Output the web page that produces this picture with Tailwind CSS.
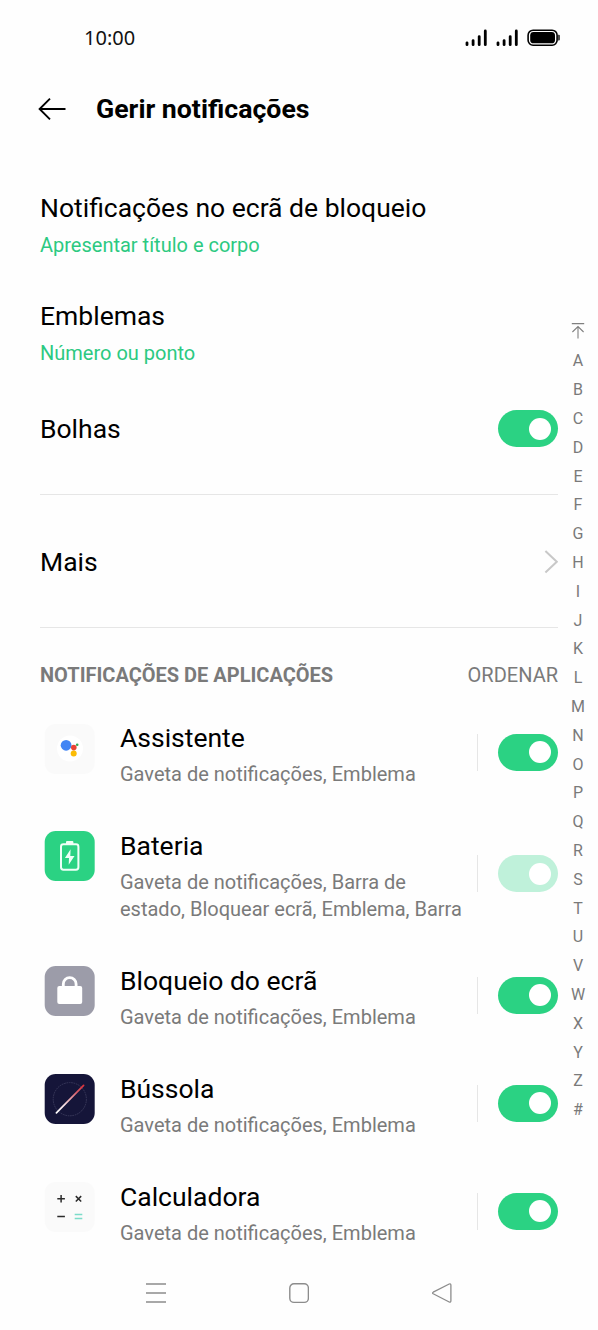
<!DOCTYPE html>
<html lang="pt">
<head>
<meta charset="utf-8">
<title>Gerir notificações</title>
<script src="https://cdn.jsdelivr.net/npm/@tailwindcss/browser@4"></script>
</head>
<body class="w-[598px] h-[1330px] overflow-hidden bg-[#fefefe] font-['Roboto',sans-serif] text-black">

<!-- Status bar -->
<div class="flex h-[75px] items-center justify-between pl-[84px] pr-[37px]">
  <span class="font-['Noto_Sans',sans-serif] text-[20px] leading-[24px] text-[#111]">10:00</span>
  <svg class="h-[20px] w-[96px]" viewBox="0 0 96 20">
    <g stroke="#000" stroke-width="2.8" stroke-linecap="round">
      <path d="M2 14.8v1.9M8.1 12.6v4.1M14.2 8.6v8.1M20.3 3v13.7M33 14.8v1.9M39.1 12.6v4.1M45.2 8.6v8.1M51.3 3v13.7"/>
    </g>
    <rect x="63.1" y="2.2" width="29" height="15" rx="5" fill="none" stroke="#000" stroke-width="1.6"/>
    <rect x="65.2" y="4.1" width="24.8" height="11.2" rx="3.4"/>
    <path d="M93.2 6.8h.6a1 1 0 0 1 1 1v3.8a1 1 0 0 1-1 1h-.6z" fill="#222"/>
  </svg>
</div>

<!-- Title bar -->
<header class="flex h-[68px] items-center gap-[30px] pl-[38px]">
  <svg class="h-[24px] w-[28px]" viewBox="0 0 28 24" fill="none" stroke="#000" stroke-width="1.9"><path d="M27.5 12H1.8M12 1.6L1.6 12 12 22.4"/></svg>
  <h1 class="text-[26.7px] font-bold leading-[32px]">Gerir notificações</h1>
</header>

<div class="flex h-[1122px]">
  <main class="w-[558px] pl-[40px] pt-[26px]">
    <div class="h-[108px] pt-[23px]">
      <div class="text-[26.5px] leading-[32px]">Notificações no ecrã de bloqueio</div>
      <div class="mt-[8px] text-[20px] leading-[27px] text-[#2cc981]">Apresentar título e corpo</div>
    </div>
    <div class="h-[108px] pt-[23px]">
      <div class="text-[26.5px] leading-[32px]">Emblemas</div>
      <div class="mt-[8px] text-[20px] leading-[27px] text-[#2cc981]">Número ou ponto</div>
    </div>
    <div class="flex h-[87px] items-center justify-between">
      <div class="pt-px text-[26.5px] leading-[32px]">Bolhas</div>
      <div class="flex h-[37px] w-[60px] items-center justify-end rounded-full bg-[#2bd283] pr-[7px]"><span class="size-[22px] rounded-full bg-white"></span></div>
    </div>
    <div class="mt-[22px] h-px bg-[#e6e6e6]"></div>
    <div class="flex h-[132px] items-center justify-between pt-[2px]">
      <div class="text-[26.5px] leading-[32px]">Mais</div>
      <svg class="h-[24px] w-[14px]" viewBox="0 0 14 24" fill="none" stroke="#c8c8c8" stroke-width="2"><path d="M1.4 .9L12.8 11.7 1.4 22.5"/></svg>
    </div>
    <div class="h-px bg-[#e6e6e6]"></div>
    <div class="flex h-[70px] items-center justify-between pt-[24px] text-[20px] leading-[24px] text-[#7a7a7a]">
      <h2 class="font-bold">NOTIFICAÇÕES DE APLICAÇÕES</h2>
      <span>ORDENAR</span>
    </div>

    <div class="flex h-[108px] items-center">
      <svg class="ml-[4px] mt-[26px] h-[50px] w-[51px] shrink-0 self-start" viewBox="0 0 51 50">
        <rect x=".7" width="50" height="50" rx="11" fill="#fafafa"/>
        <circle cx="26" cy="24.5" r="13" fill="#fff"/>
        <circle cx="22.1" cy="21.3" r="5.4" fill="#4285f4"/>
        <circle cx="29.8" cy="23.6" r="2.8" fill="#ea4335"/>
        <circle cx="29.7" cy="29.4" r="3" fill="#fbbc05"/>
        <circle cx="33.2" cy="20.8" r="1.3" fill="#34a853"/>
      </svg>
      <div class="ml-[25px] w-[357px] pt-[6px]">
        <div class="text-[26.5px] leading-[32px]">Assistente</div>
        <div class="mt-[7px] text-[20px] leading-[27px] text-[#7a7a7a]">Gaveta de notificações, Emblema</div>
      </div>
      <div class="mr-[20px] h-[37px] w-px bg-[#e6e6e6]"></div>
      <div class="flex h-[37px] w-[60px] shrink-0 items-center justify-end rounded-full bg-[#2bd283] pr-[7px]"><span class="size-[22px] rounded-full bg-white"></span></div>
    </div>

    <div class="flex h-[135px] items-center">
      <svg class="ml-[4px] mt-[25px] h-[50px] w-[51px] shrink-0 self-start" viewBox="0 0 51 50">
        <rect x=".7" width="50" height="50" rx="11" fill="#2bd283"/>
        <rect x="17" y="13.3" width="17.4" height="25.4" rx="2.4" fill="none" stroke="#effff7" stroke-width="2"/>
        <rect x="22" y="10" width="7.4" height="3.6" rx="1" fill="#effff7"/>
        <path d="M26.6 18.2L20.9 27h4.1l-.3 6.7L30.5 25h-4.2z" fill="#effff7"/>
      </svg>
      <div class="ml-[25px] w-[357px] pt-[6px]">
        <div class="text-[26.5px] leading-[32px]">Bateria</div>
        <div class="mt-[7px] text-[20px] leading-[27px] whitespace-nowrap text-[#7a7a7a]">Gaveta de notificações, Barra de<br>estado, Bloquear ecrã, Emblema, Barra</div>
      </div>
      <div class="mr-[20px] h-[37px] w-px bg-[#e6e6e6]"></div>
      <div class="flex h-[37px] w-[60px] shrink-0 items-center justify-end rounded-full bg-[#bff1da] pr-[7px]"><span class="size-[22px] rounded-full bg-white"></span></div>
    </div>

    <div class="flex h-[108px] items-center">
      <svg class="ml-[4px] mt-[25px] h-[50px] w-[51px] shrink-0 self-start" viewBox="0 0 51 50">
        <rect x=".7" width="50" height="50" rx="11" fill="#9c9ca9"/>
        <rect x="13.3" y="20" width="24.9" height="18" rx="2" fill="#fff"/>
        <path d="M19.3 21v-3a6.4 6.4 0 0 1 12.8 0v3" fill="none" stroke="#fff" stroke-width="2.8"/>
      </svg>
      <div class="ml-[25px] w-[357px] pt-[6px]">
        <div class="text-[26.5px] leading-[32px]">Bloqueio do ecrã</div>
        <div class="mt-[7px] text-[20px] leading-[27px] text-[#7a7a7a]">Gaveta de notificações, Emblema</div>
      </div>
      <div class="mr-[20px] h-[37px] w-px bg-[#e6e6e6]"></div>
      <div class="flex h-[37px] w-[60px] shrink-0 items-center justify-end rounded-full bg-[#2bd283] pr-[7px]"><span class="size-[22px] rounded-full bg-white"></span></div>
    </div>

    <div class="flex h-[108px] items-center">
      <svg class="ml-[4px] mt-[25px] h-[50px] w-[51px] shrink-0 self-start" viewBox="0 0 51 50">
        <defs><linearGradient id="needle" gradientUnits="userSpaceOnUse" x1="12" y1="39" x2="40" y2="11"><stop stop-color="#fff"/><stop offset=".3" stop-color="#f3dde2"/><stop offset=".75" stop-color="#d65a66"/><stop offset="1" stop-color="#e02f38"/></linearGradient></defs>
        <rect x=".7" width="50" height="50" rx="11" fill="#151539"/>
        <circle cx="25.8" cy="25.2" r="16.6" fill="none" stroke="#3a3a5c" stroke-width="1" stroke-dasharray="1.6 .8"/>
        <path d="M12.4 38.8L39.6 11.4" stroke="url(#needle)" stroke-width="1.7" stroke-linecap="round"/>
      </svg>
      <div class="ml-[25px] w-[357px] pt-[6px]">
        <div class="text-[26.5px] leading-[32px]">Bússola</div>
        <div class="mt-[7px] text-[20px] leading-[27px] text-[#7a7a7a]">Gaveta de notificações, Emblema</div>
      </div>
      <div class="mr-[20px] h-[37px] w-px bg-[#e6e6e6]"></div>
      <div class="flex h-[37px] w-[60px] shrink-0 items-center justify-end rounded-full bg-[#2bd283] pr-[7px]"><span class="size-[22px] rounded-full bg-white"></span></div>
    </div>

    <div class="flex h-[108px] items-center">
      <svg class="ml-[4px] mt-[25px] h-[50px] w-[51px] shrink-0 self-start" viewBox="0 0 51 50" fill="none" stroke="#2b2b2b" stroke-width="1.5">
        <rect x=".7" width="50" height="50" rx="11" fill="#fafafa" stroke="none"/>
        <path d="M13.3 16.8h7.6M17.1 13v7.6M31.8 14.1l5.4 5.4M37.2 14.1l-5.4 5.4M13.3 34.6h7.6"/>
        <path d="M30.7 32.6h7.6M30.7 36.6h7.6" stroke="#7bdcc9"/>
      </svg>
      <div class="ml-[25px] w-[357px] pt-[6px]">
        <div class="text-[26.5px] leading-[32px]">Calculadora</div>
        <div class="mt-[7px] text-[20px] leading-[27px] text-[#7a7a7a]">Gaveta de notificações, Emblema</div>
      </div>
      <div class="mr-[20px] h-[37px] w-px bg-[#e6e6e6]"></div>
      <div class="flex h-[37px] w-[60px] shrink-0 items-center justify-end rounded-full bg-[#2bd283] pr-[7px]"><span class="size-[22px] rounded-full bg-white"></span></div>
    </div>
  </main>

  <!-- Alphabet index -->
  <aside class="flex w-[40px] flex-col items-center pt-[180px] text-[16px] leading-[28.8px] text-[#7a7a7a]">
    <svg class="mb-[7.4px] h-[17px] w-[14px]" viewBox="0 0 14 17" fill="none" stroke="#808080" stroke-width="1.1"><path d="M.8 .6h12.4M7 15.6V3.8M1.4 9L7 3.6 12.6 9"/></svg>
    <span>A</span><span>B</span><span>C</span><span>D</span><span>E</span><span>F</span><span>G</span><span>H</span><span>I</span><span>J</span><span>K</span><span>L</span><span>M</span><span>N</span><span>O</span><span>P</span><span>Q</span><span>R</span><span>S</span><span>T</span><span>U</span><span>V</span><span>W</span><span>X</span><span>Y</span><span>Z</span><span>#</span>
  </aside>
</div>

<!-- System navigation -->
<nav class="flex h-[56px] items-center justify-between pl-[146px] pr-[146px]">
  <svg class="h-[22px] w-[20px]" viewBox="0 0 20 22" stroke="#8c8c8c" stroke-width="1.4"><path d="M0 2h20M0 11h20M0 20h20"/></svg>
  <svg class="h-[22px] w-[20px]" viewBox="0 0 20 22" fill="none" stroke="#8c8c8c" stroke-width="1.4"><rect x=".8" y="1.8" width="18.6" height="18.6" rx="4.2"/></svg>
  <svg class="h-[22px] w-[20px]" viewBox="0 0 20 22" fill="none" stroke="#8c8c8c" stroke-width="1.3"><path d="M1.2 10.2L17.2 2Q18.9 1.4 18.9 3.2V18.8Q18.9 20.6 17.2 20L1.2 11.8Q-.2 11 1.2 10.2z"/></svg>
</nav>
</body>
</html>
